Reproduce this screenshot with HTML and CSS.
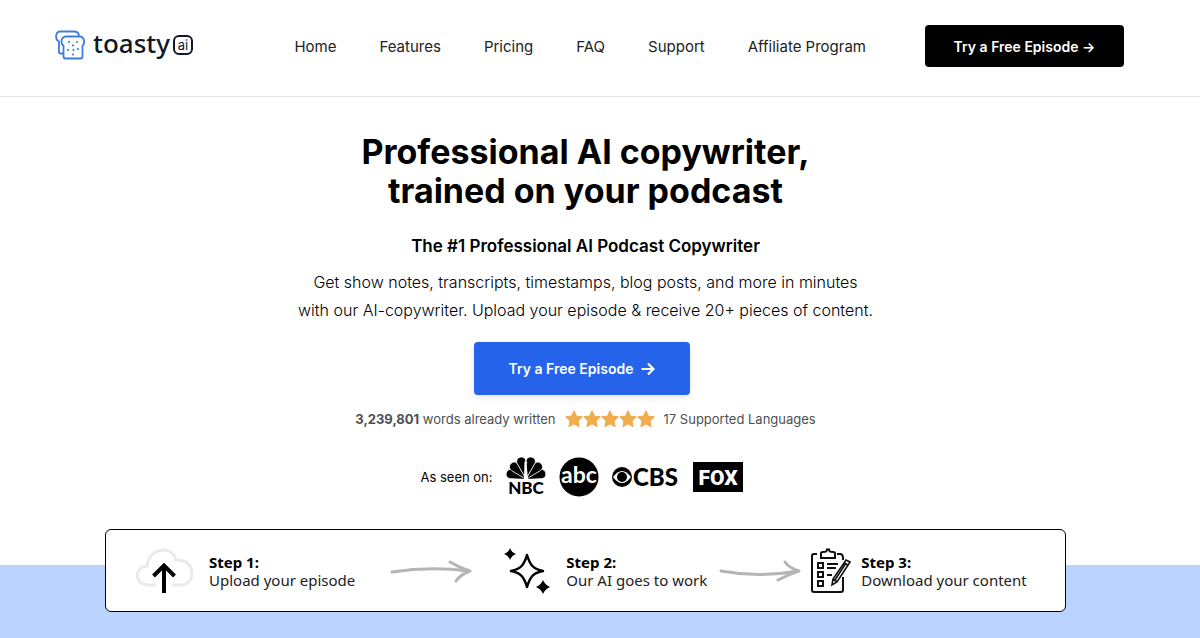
FILE: index.html
```
<!DOCTYPE html>
<html lang="en">
<head>
  <meta charset="UTF-8">
  <meta name="viewport" content="width=device-width, initial-scale=1.0">
  <title>Toasty AI</title>
  <link rel="stylesheet" href="styles.css">
</head>
<body>

<header class="header">
  <a class="logo" href="#" aria-label="toasty ai">
    <svg class="logo-icon" width="30" height="30" viewBox="0 0 30 30" fill="none" stroke="#3b7de0" stroke-width="1.8" stroke-linejoin="round">
      <path d="M8 23.500H5.500Q4 23.500 4 22V11.500C0 10 0 2 5 1.500H19C22 1.500 24 3 24 6.500"/>
      <path d="M11 6.500H25C30 7 30 14 27.500 15.500V26.500Q27.500 28.500 25.500 28.500H10.500Q8.500 28.500 8.500 26.500V15.500C5.500 14 5.500 7 11 6.500Z"/>
      <g fill="#3b7de0" stroke="none"><circle cx="14" cy="12" r="1.100"/><circle cx="22" cy="12" r="1.100"/><circle cx="18" cy="15.500" r="1.100"/><circle cx="23" cy="19" r="1.100"/><circle cx="13" cy="20" r="1.100"/><circle cx="18.500" cy="20" r="1.100"/><circle cx="18" cy="24.500" r="1.100"/></g>
    </svg>
    <span class="logo-name">toasty</span>
    <span class="logo-ai">ai</span>
  </a>
  <nav class="nav">
    <a href="#">Home</a>
    <a href="#">Features</a>
    <a href="#">Pricing</a>
    <a href="#">FAQ</a>
    <a href="#">Support</a>
    <a href="#">Affiliate Program</a>
  </nav>
  <button class="btn btn-dark" type="button">Try a Free Episode →</button>
</header>

<main class="hero">
  <h1>Professional AI copywriter,<br>trained on your podcast</h1>
  <h2>The #1 Professional AI Podcast Copywriter</h2>
  <p class="intro">Get show notes, transcripts, timestamps, blog posts, and more in minutes<br>with our AI-copywriter. Upload your episode &amp; receive 20+ pieces of content.</p>
  <button class="btn btn-blue" type="button">Try a Free Episode
    <svg width="14" height="14" viewBox="0 0 14 14" fill="none" stroke="#fff" stroke-width="2.200"><path d="M0.500 7H12M7 1.500L12.500 7L7 12.500"/></svg>
  </button>

  <div class="stats">
    <span><strong>3,239,801</strong> words already written</span>
    <svg width="90" height="18" viewBox="0 0 90 18" fill="#f0ad4e" stroke="#f0ad4e" stroke-width="1.200" stroke-linejoin="round">
      <defs><path id="star" d="M9 1L11.400 6.200L17 6.900L12.900 10.800L14 16.500L9 13.700L4 16.500L5.100 10.800L1 6.900L6.600 6.200Z"/></defs>
      <use href="#star"/><use href="#star" x="18"/><use href="#star" x="36"/><use href="#star" x="54"/><use href="#star" x="72"/>
    </svg>
    <span>17 Supported Languages</span>
  </div>

  <div class="press">
    <span>As seen on:</span>
    <svg class="nbc" width="40" height="44" viewBox="0 0 40 44">
      <defs><path id="feather" d="M20 24L15.500 7C14 -0.500 26 -0.500 24.500 7Z"/></defs>
      <g stroke="#fff" stroke-width="0.800">
        <use href="#feather" transform="rotate(-72 20 24) translate(0 2)"/><use href="#feather" transform="rotate(72 20 24) translate(0 2)"/>
        <use href="#feather" transform="rotate(-44 20 24) translate(0 1)"/><use href="#feather" transform="rotate(44 20 24) translate(0 1)"/>
        <use href="#feather" transform="rotate(-15 20 24)"/><use href="#feather" transform="rotate(15 20 24)"/>
      </g>
      <path d="M18.500 7L19 6L21.500 7.500L20.500 8.500L22 24H18Z" fill="#fff"/>
      <path d="M0 24H40V32H0Z" fill="#fff"/>
      <text x="20" y="39" text-anchor="middle" font-size="17">NBC</text>
    </svg>
    <svg class="abc" width="40" height="40" viewBox="0 0 40 40">
      <circle cx="20" cy="20" r="19.500"/>
      <text x="20" y="26" text-anchor="middle" font-size="23" fill="#fff">abc</text>
    </svg>
    <svg class="cbs" width="68" height="28" viewBox="0 0 68 28">
      <circle cx="10" cy="14" r="10"/>
      <path d="M1 14Q10 2 19 14Q10 26 1 14Z" fill="#fff"/>
      <circle cx="10" cy="14" r="5"/>
      <text x="21" y="23" font-size="24">CBS</text>
    </svg>
    <svg class="fox" width="50" height="30" viewBox="0 0 50 30">
      <path d="M0 0H50V30H0Z"/>
      <text x="25" y="23" text-anchor="middle" font-size="21" fill="#fff">FOX</text>
    </svg>
  </div>
</main>

<section class="steps">
  <div class="steps-box">
    <div class="step">
      <svg width="58" height="46" viewBox="0 0 58 46" fill="none">
        <path d="M20 37H12C-1 36 -1 19 12 18C14 -1 38 -3 41 12C61 11 62 36 46 37H38" stroke="#e9eaed" stroke-width="3" stroke-linecap="round"/>
        <path d="M29 45V19M18.500 28L29 17.500L39.500 28" stroke="#000" stroke-width="4"/>
      </svg>
      <p><strong>Step 1:</strong><br>Upload your episode</p>
    </div>
    <svg class="arrow-first" width="82" height="24" viewBox="0 0 82 24" fill="none" stroke="#b5b5b5" stroke-width="3" stroke-linecap="round" stroke-linejoin="round">
      <path d="M2 13Q40 7 79 12M60 3Q70 9 80 12Q70 16 66 22"/>
    </svg>
    <div class="step">
      <svg width="46" height="46" viewBox="0 0 46 46">
        <path d="M23 7C26 17 29 21 39 23C29 25 26 29 23 39C20 29 17 25 7 23C17 21 20 17 23 7Z" fill="none" stroke="#000" stroke-width="2.500" stroke-linejoin="round"/>
        <path d="M6 0Q7.500 4.500 12 6Q7.500 7.500 6 12Q4.500 7.500 0 6Q4.500 4.500 6 0ZM39 32Q41 37 46 39Q41 41 39 46Q37 41 32 39Q37 37 39 32Z"/>
      </svg>
      <p><strong>Step 2:</strong><br>Our AI goes to work</p>
    </div>
    <svg class="arrow-second" width="82" height="24" viewBox="0 0 82 24" fill="none" stroke="#b5b5b5" stroke-width="3" stroke-linecap="round" stroke-linejoin="round">
      <path d="M2 12Q40 19 79 12M66 3Q70 9 80 12Q70 15 59 21"/>
    </svg>
    <div class="step step-last">
      <svg width="40" height="46" viewBox="0 0 40 46" fill="none" stroke="#111" stroke-width="2">
        <path d="M6 6H3Q1 6 1 8V42Q1 44 3 44H30Q32 44 32 42V29M26 6H29Q32 6 32 10V12"/>
        <path d="M10 10V5Q10 4 12 4Q16 4 16 1.500H18Q18 4 22 4Q24 4 24 5V10Z"/>
        <path d="M7 15H12V20H7ZM7 24H12V29H7ZM7 33H12V38H7ZM16 16H27M16 20H25M16 27H21"/>
        <path d="M21 37L22 31L35 12L39 14L26 34ZM22 31L26 34M33 15L37 17M24 32L35 15" stroke-width="1.600"/>
      </svg>
      <p><strong>Step 3:</strong><br>Download your content</p>
    </div>
  </div>
</section>

</body>
</html>
```
FILE: styles.css
```
body {
  display: flex;
  flex-direction: column;
  min-height: 100vh;
  margin: 0;
  background: #fff;
  color: #000;
  font-family: Inter, "Liberation Sans", sans-serif;
}

a {
  color: inherit;
  text-decoration: none;
}

h1, h2, p {
  margin: 0;
}

svg {
  flex: none;
}

.header {
  display: flex;
  align-items: center;
  height: 97px;
  padding: 0 76px 4px 55px;
  box-sizing: border-box;
  border-bottom: 1px solid #e5e5e5;
}

.logo {
  display: flex;
  align-items: center;
  padding-bottom: 3px;
  color: #101828;
}

.logo-name {
  margin: 0 3px 3px 8px;
  font-family: "Noto Sans", sans-serif;
  font-size: 26px;
  font-weight: 500;
  line-height: 30px;
}

.logo-ai {
  width: 16px;
  height: 16px;
  border: 2px solid #101828;
  border-radius: 6px;
  font-size: 13px;
  line-height: 16px;
  text-align: center;
}

.nav {
  display: flex;
  gap: 43px;
  margin: 0 59px 0 auto;
  color: #222;
  font-size: 15px;
}

.btn {
  border: 0;
  border-radius: 4px;
  color: #fff;
  font-family: inherit;
  font-size: 14px;
  font-weight: 600;
  cursor: pointer;
}

.btn-dark {
  width: 199px;
  height: 42px;
  background: #000;
}

.btn-blue {
  display: flex;
  align-items: center;
  justify-content: center;
  gap: 8px;
  width: 216px;
  height: 53px;
  margin: 18px 7px 0 0;
  background: #2563eb;
  box-shadow: 0 2px 6px rgba(0, 0, 0, 0.12);
}

.hero {
  display: flex;
  flex-direction: column;
  align-items: center;
  padding: 35px 29px 30px 0;
}

h1 {
  font-size: 34px;
  font-weight: 700;
  line-height: 39px;
  text-align: center;
}

h2 {
  margin-top: 25px;
  font-size: 17px;
  font-weight: 600;
  line-height: 22px;
}

.intro {
  margin-top: 11px;
  font-size: 16px;
  font-weight: 300;
  line-height: 28px;
  text-align: center;
}

.stats {
  display: flex;
  align-items: center;
  gap: 9px;
  margin-top: 14px;
  color: #4b5052;
  font-size: 13px;
  line-height: 20px;
}

.press {
  display: flex;
  align-items: center;
  gap: 13px;
  margin: 26px 8px 0 0;
  font-size: 13px;
}

.nbc text, .cbs text {
  font-family: Lato, sans-serif;
  font-weight: 900;
}

.abc text {
  font-family: Lato, sans-serif;
  font-weight: 700;
}

.fox text {
  font-family: Roboto, sans-serif;
  font-weight: 900;
}

/* white down to the middle of the box, blue below it */
.steps {
  flex: 1;
  padding: 0 134px 26px 105px;
  background: linear-gradient(#fff 36px, #bbd3ff 36px);
}

.steps-box {
  display: flex;
  align-items: center;
  padding: 18px 29px 17px;
  border: 1px solid #000;
  border-radius: 6px;
  background: #fff;
}

.arrow-first {
  margin: 0 32px 0 35px;
}

.arrow-second {
  margin: 0 10px 0 12px;
}

.step {
  display: flex;
  align-items: center;
  gap: 16px;
  color: #222;
  font-family: "Noto Sans", sans-serif;
  font-size: 15px;
  line-height: 18px;
}

.step-last {
  gap: 10px;
}

.step strong {
  color: #000;
}
```
